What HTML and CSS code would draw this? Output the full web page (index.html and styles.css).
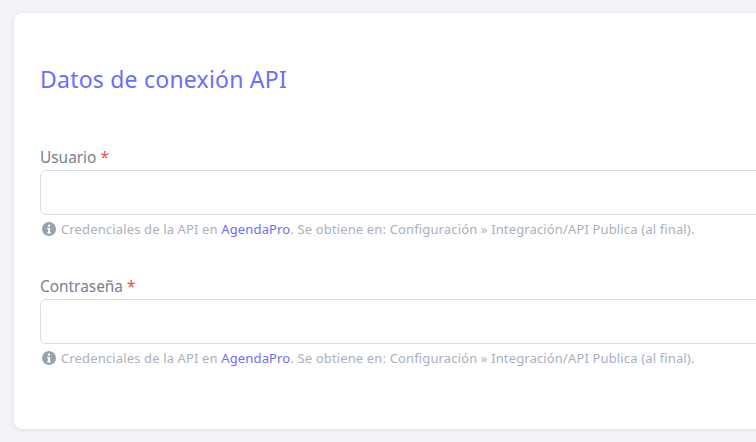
FILE: index.html
```html
<!DOCTYPE html>
<html lang="es">
<head>
  <meta charset="UTF-8" />
  <title>Datos de conexión API</title>
  <link rel="stylesheet" href="styles.css">
</head>
<body>
  <div class="card">
    <h2 class="card-title">Datos de conexión API</h2>

    <div class="field">
      <label class="field-label" for="usuario">Usuario <span class="required">*</span></label>
      <input class="field-input" id="usuario" type="text">
      <p class="field-hint">
        <svg class="hint-icon" viewBox="0 0 14 14"><circle cx="7" cy="7" r="7" fill="#98a1b2"/><rect x="5.9" y="2.5" width="2.2" height="2.2" rx=".6" fill="#fff"/><path d="M5.2 6h2.9v4.2h.8v1.3H5.2v-1.3h.9V7.3h-.9z" fill="#fff"/></svg>
        <span>Credenciales de la API en <a href="#">AgendaPro</a>. Se obtiene en: Configuración » Integración/API Publica (al final).</span>
      </p>
    </div>

    <div class="field">
      <label class="field-label" for="contrasena">Contraseña <span class="required">*</span></label>
      <input class="field-input" id="contrasena" type="password">
      <p class="field-hint">
        <svg class="hint-icon" viewBox="0 0 14 14"><circle cx="7" cy="7" r="7" fill="#98a1b2"/><rect x="5.9" y="2.5" width="2.2" height="2.2" rx=".6" fill="#fff"/><path d="M5.2 6h2.9v4.2h.8v1.3H5.2v-1.3h.9V7.3h-.9z" fill="#fff"/></svg>
        <span>Credenciales de la API en <a href="#">AgendaPro</a>. Se obtiene en: Configuración » Integración/API Publica (al final).</span>
      </p>
    </div>
  </div>
</body>
</html>
```

FILE: styles.css
```css
html, body {
  overflow: hidden;
}

body {
  margin: 0;
  width: 756px;
  height: 442px;
  padding: 13px 0 0 14px;
  box-sizing: border-box;
  background: #f3f3f9;
  font-family: "Noto Sans", "Open Sans", sans-serif;
}

.card {
  width: 900px;
  height: 416px;
  box-sizing: border-box;
  padding: 51px 26px 0 26px;
  background: #fff;
  border-radius: 8px;
  box-shadow: 0 1px 4px rgba(30, 40, 80, 0.1);
}

.card-title {
  margin: 0 0 51px 0;
  font-size: 23px;
  line-height: 30px;
  font-weight: 400;
  letter-spacing: 0.22px;
  color: #6c6cff;
}

.field {
  margin-bottom: 36px;
}

.field-label {
  display: block;
  height: 25px;
  font-size: 15.4px;
  line-height: 25px;
  color: #77818f;
}

.required {
  color: #f1503c;
}

.field-input {
  display: block;
  width: 100%;
  height: 45px;
  box-sizing: border-box;
  border: 1px solid #d8dee6;
  border-radius: 6px;
  background: #fff;
}

.field-hint {
  display: flex;
  align-items: center;
  gap: 5px;
  margin: 5px 0 0 2px;
  font-size: 13px;
  line-height: 18px;
  letter-spacing: 0.14px;
  color: #a9b0be;
}

.hint-icon {
  width: 14px;
  height: 14px;
  flex-shrink: 0;
}

.field-hint a {
  color: #6c6cff;
  text-decoration: none;
}
```
